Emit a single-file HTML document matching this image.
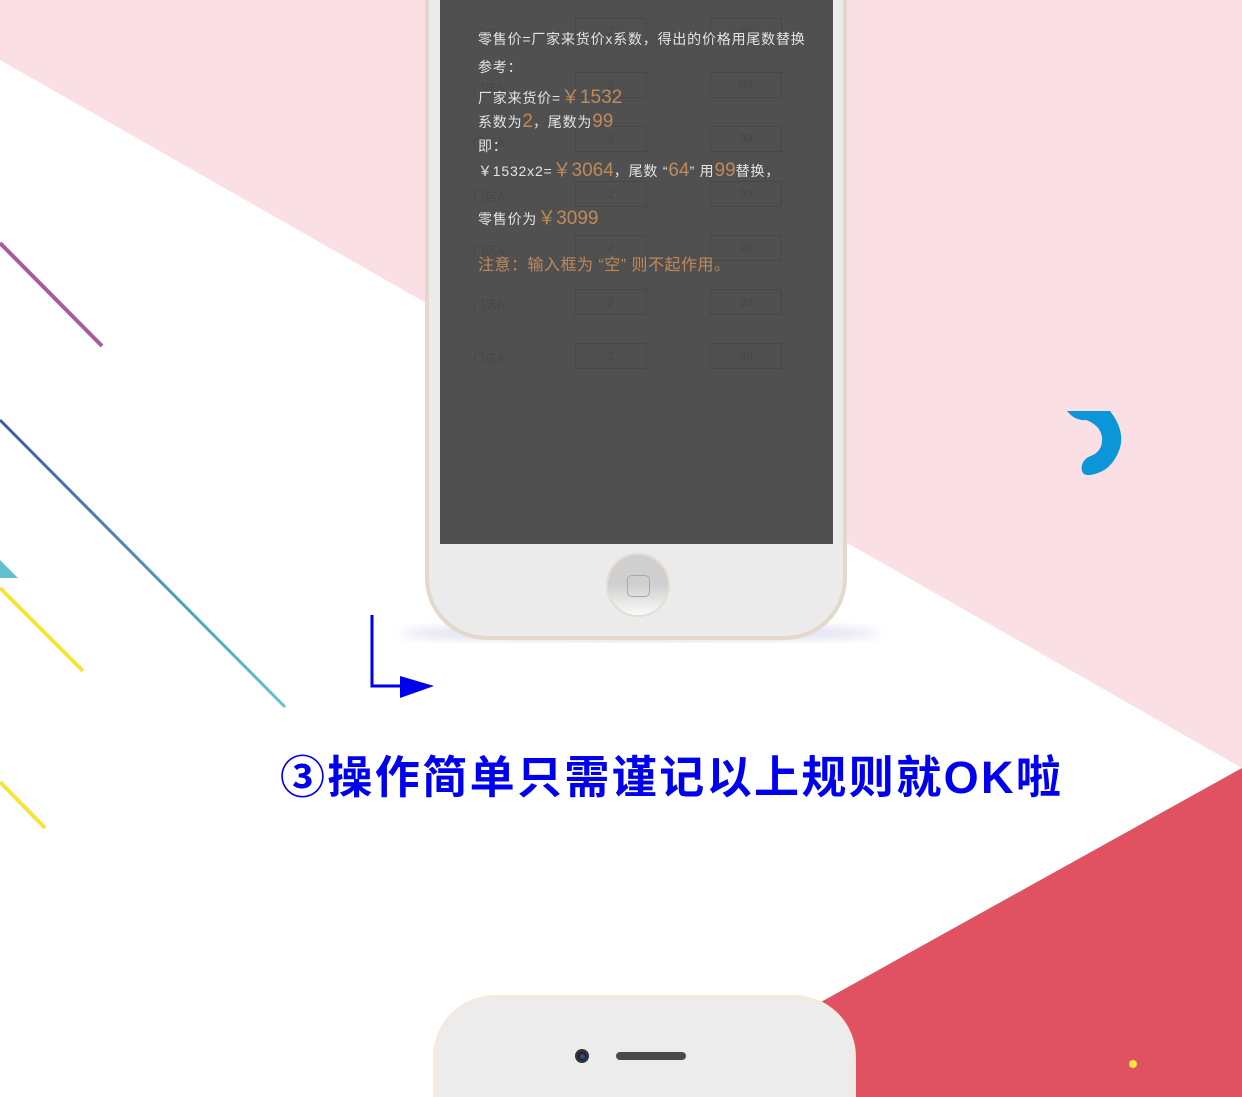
<!DOCTYPE html>
<html><head><meta charset="utf-8"><style>
*{margin:0;padding:0;box-sizing:border-box}
html,body{width:1242px;height:1097px;overflow:hidden}
body{position:relative;background:#fff;font-family:"Liberation Sans","Noto Sans CJK SC",sans-serif}
.abs{position:absolute}
.scr{position:absolute;left:440px;top:0;width:393px;height:544px;background:#505050;}
.t{position:absolute;left:38px;color:#e4e4e4;font-size:14px;white-space:nowrap;line-height:1;letter-spacing:0.8px}
.o{color:#c08a58;font-size:19px;letter-spacing:0}
.row{position:absolute;left:33px;color:#474747;font-size:12px}
.box{position:absolute;width:72px;height:26px;border:1px solid #474747;color:#474747;font-size:12px;text-align:center;line-height:24px}
</style></head><body>
<svg class="abs" style="left:0;top:0" width="1242" height="1097">
<defs><linearGradient id="g" x1="0" y1="0" x2="1" y2="1"><stop offset="0" stop-color="#3e5aa6"/><stop offset="1" stop-color="#62c3cc"/></linearGradient>
<filter id="b"><feGaussianBlur stdDeviation="5"/></filter></defs>
<polygon points="0,0 1242,0 1242,768 0,60" fill="#fadfe4"/>
<polygon points="1242,768 1242,1097 650,1097" fill="#e05262"/>
<line x1="0" y1="243" x2="102" y2="346" stroke="#a85a9c" stroke-width="4"/>
<line x1="0" y1="420" x2="285" y2="707" stroke="url(#g)" stroke-width="3"/>
<polygon points="0,560 0,578 18,578" fill="#62bfcc"/>
<line x1="0" y1="588" x2="83" y2="671" stroke="#f5e43a" stroke-width="4"/>
<line x1="0" y1="782" x2="45" y2="828" stroke="#f5e43a" stroke-width="4"/>
<path d="M1067,411 L1110,411 Q1125,430 1120,448 Q1112,472 1090,475 Q1080,476 1082,465 Q1084,458 1093,455 Q1103,450 1102,437 Q1100,425 1086,420 Q1075,421 1067,411Z" fill="#0a96d8"/>
<ellipse cx="640" cy="633" rx="240" ry="8" fill="#c6c8e6" opacity="0.6" filter="url(#b)"/>
<path d="M372,615 V686 H404" stroke="#0000ee" stroke-width="3" fill="none"/>
<polygon points="400,676 434,686 400,698" fill="#0000ee"/>
<circle cx="1133" cy="1064" r="4" fill="#f5e43a"/>
</svg>
<div class="abs" style="left:425px;top:0;width:422px;height:640px;background:#ebebeb;border:4px solid #e2d8cc;border-top:none;border-radius:0 0 62px 62px"></div>
<div class="scr">
<div class="row" style="top:25px">门店A</div><div class="box" style="left:135px;top:18px">2</div><div class="box" style="left:270px;top:18px">99</div>
<div class="row" style="top:80px">门店A</div><div class="box" style="left:135px;top:72px">2</div><div class="box" style="left:270px;top:72px">99</div>
<div class="row" style="top:134px">门店A</div><div class="box" style="left:135px;top:126px">2</div><div class="box" style="left:270px;top:126px">99</div>
<div class="row" style="top:188px">门店A</div><div class="box" style="left:135px;top:181px">2</div><div class="box" style="left:270px;top:181px">99</div>
<div class="row" style="top:242px">门店A</div><div class="box" style="left:135px;top:235px">2</div><div class="box" style="left:270px;top:235px">99</div>
<div class="row" style="top:296px">门店A</div><div class="box" style="left:135px;top:289px">2</div><div class="box" style="left:270px;top:289px">99</div>
<div class="row" style="top:350px">门店A</div><div class="box" style="left:135px;top:343px">2</div><div class="box" style="left:270px;top:343px">99</div>
<div class="t" style="top:32px">零售价=厂家来货价x系数，得出的价格用尾数替换</div>
<div class="t" style="top:60px">参考：</div>
<div class="t" style="top:88px">厂家来货价=<span class="o">￥1532</span></div>
<div class="t" style="top:112px">系数为<span class="o">2</span>，尾数为<span class="o">99</span></div>
<div class="t" style="top:139px">即：</div>
<div class="t" style="top:161px">￥1532x2=<span class="o">￥3064</span>，尾数 “<span class="o">64</span>” 用<span class="o">99</span>替换，</div>
<div class="t" style="top:209px">零售价为<span class="o">￥3099</span></div>
<div class="t" style="top:258px;color:#c08a58;font-size:16px;letter-spacing:0.5px">注意：输入框为 “空” 则不起作用。</div>
</div>
<div class="abs" style="left:606px;top:553px;width:64px;height:64px;border-radius:50%;border:2px solid #e6ddd0;background:linear-gradient(#cfcfcf 50%,#fafafa)"></div>
<div class="abs" style="left:627px;top:575px;width:23px;height:22px;border:1px solid #a8a8a8;border-radius:5px"></div>
<div class="abs" style="left:280px;top:748px;font-size:45px;font-weight:bold;color:#0000ee;white-space:nowrap;line-height:60px;letter-spacing:2.4px">③操作简单只需谨记以上规则就OK啦</div>
<div class="abs" style="left:433px;top:995px;width:423px;height:102px;background:#ececec;border:4px solid #f3ebe0;border-bottom:none;border-radius:62px 62px 0 0"></div>
<div class="abs" style="left:575px;top:1049px;width:14px;height:14px;border-radius:50%;background:#222;border:3px solid #333"><div style="width:5px;height:5px;margin:2px;border-radius:50%;background:#2c4a9a"></div></div>
<div class="abs" style="left:616px;top:1052px;width:70px;height:8px;border-radius:4px;background:#4a4a4a"></div>
</body></html>
